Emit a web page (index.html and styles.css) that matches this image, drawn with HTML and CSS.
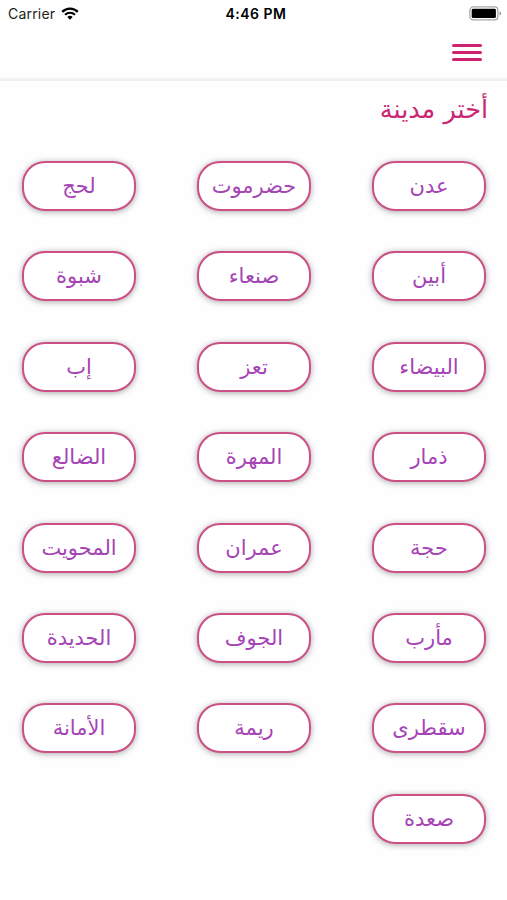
FILE: index.html
```html
<!DOCTYPE html>
<html lang="ar" dir="rtl">
<head>
  <meta charset="UTF-8" />
  <title>أختر مدينة</title>
  <meta name="viewport" content="width=device-width, initial-scale=1.0" />
  <link rel="stylesheet" href="styles.css">
</head>
<body>
  <header class="header">
    <div class="status-bar" dir="ltr">
      <div class="carrier">
        <span>Carrier</span>
        <svg class="wifi" viewBox="0 0 18 13" width="18" height="13">
          <path d="M1.2 4.8a11.2 11.2 0 0 1 15.6 0" fill="none" stroke="#000" stroke-width="2.4" />
          <path d="M4 7.7a7.2 7.2 0 0 1 10 0" fill="none" stroke="#000" stroke-width="2.1" />
          <path d="M6.3 10a3.9 3.9 0 0 1 5.4 0L9 12.7z" fill="#000" />
        </svg>
      </div>
      <div class="time">4:46 PM</div>
      <svg class="battery" viewBox="0 0 33 15" width="33" height="15">
        <rect x=".9" y=".9" width="28" height="13" rx="3.4" fill="#fff" stroke="#a6a6a6" stroke-width="1.3" />
        <rect x="2.7" y="2.7" width="24.2" height="9.4" rx="1.4" fill="#000" />
        <path d="M30.6 5.2q3 2.2 0 4.4z" fill="#888" />
      </svg>
    </div>
    <button class="menu-btn" aria-label="القائمة">
      <span></span>
      <span></span>
      <span></span>
    </button>
  </header>

  <main class="content">
    <h1 class="title">أختر مدينة</h1>
    <div class="cities">
      <button class="city">عدن</button>
      <button class="city">حضرموت</button>
      <button class="city">لحج</button>
      <button class="city">أبين</button>
      <button class="city">صنعاء</button>
      <button class="city">شبوة</button>
      <button class="city">البيضاء</button>
      <button class="city">تعز</button>
      <button class="city">إب</button>
      <button class="city">ذمار</button>
      <button class="city">المهرة</button>
      <button class="city">الضالع</button>
      <button class="city">حجة</button>
      <button class="city">عمران</button>
      <button class="city">المحويت</button>
      <button class="city">مأرب</button>
      <button class="city">الجوف</button>
      <button class="city">الحديدة</button>
      <button class="city">سقطرى</button>
      <button class="city">ريمة</button>
      <button class="city">الأمانة</button>
      <button class="city">صعدة</button>
    </div>
  </main>
</body>
</html>
```

FILE: styles.css
```css
* { box-sizing: border-box; }
body {
  margin: 0;
  height: 900px;
  overflow: hidden;
  background-color: #fefefe;
  font-family: "DejaVu Sans", sans-serif;
}
.header {
  height: 81px;
  border-bottom: 3px solid #f1f1f1;
}
.status-bar {
  display: grid;
  grid-template-columns: 1fr auto 1fr;
  align-items: center;
  height: 27px;
  padding: 0 5px 0 8px;
  font-family: Inter, sans-serif;
  font-size: 14px;
  color: #222;
}
.carrier { display: flex; align-items: center; gap: 6px; letter-spacing: 0.2px; }
.wifi { margin-top: -1px; }
.time { padding-left: 2px; font-weight: 600; color: #000; letter-spacing: 0.5px; }
.battery { justify-self: end; }
.menu-btn {
  display: flex;
  flex-direction: column;
  gap: 4px;
  margin: 17px 25px 0 0;
  padding: 0;
  border: none;
  background: none;
}
.menu-btn span {
  width: 30px;
  height: 3px;
  border-radius: 1.5px;
  background-color: #d0216f;
}
.content { padding: 0 21px 0 22px; }
.title {
  margin: 0 -2px 0 0;
  height: 80px;
  padding-top: 9px;
  font-size: 25.5px;
  font-weight: 400;
  line-height: 38px;
  color: #ca2674;
}
.cities {
  display: grid;
  grid-template-columns: repeat(3, 114px);
  justify-content: space-between;
  row-gap: 40.4px;
}
.city {
  height: 50px;
  padding: 0;
  border: 2px solid #cb5086;
  border-radius: 23px;
  background-color: #fff;
  box-shadow: 0 1px 6px rgba(0, 0, 0, 0.34);
  font-family: "DejaVu Sans", sans-serif;
  font-size: 21px;
  line-height: 46px;
  color: #a544b4;
}
```
